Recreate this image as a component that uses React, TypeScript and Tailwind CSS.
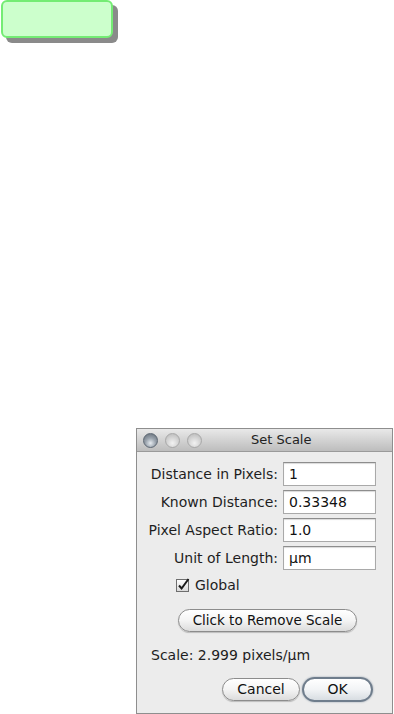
const font = { fontFamily: '"DejaVu Sans", Verdana, sans-serif' }

const Light = ({ dark }: { dark?: boolean }) => (
  <div
    className={`w-[15px] h-[15px] rounded-full border ${
      dark
        ? 'border-[#5d6773] bg-[radial-gradient(circle_at_50%_70%,#e6ebf0_0%,#9aa3ad_45%,#5f6973_100%)]'
        : 'border-[#a8a8a8] bg-[radial-gradient(circle_at_50%_70%,#f2f2f2_0%,#d4d4d4_50%,#b5b5b5_100%)]'
    }`}
  />
)

const Field = ({ label, value }: { label: string; value: string }) => (
  <div className="flex items-center h-[24px]">
    <div className="w-[146px] text-right pr-[5px] text-[14px] text-[#1e1e1e] whitespace-nowrap">{label}</div>
    <div className="w-[93px] h-[24px] border border-[#a9a9a9] border-t-[#8d8d8d] bg-white pl-[5px] flex items-center text-[14px] text-[#111] shadow-[inset_0_1px_1px_rgba(0,0,0,0.15)]">
      {value}
    </div>
  </div>
)

const Pill = ({ children, className = '' }: { children: React.ReactNode; className?: string }) => (
  <div
    className={`h-[23px] rounded-full border border-[#8c8c8c] bg-gradient-to-b from-white via-[#f4f4f4] to-[#dcdcdc] flex items-center justify-center text-[#111] shadow-[0_1px_1px_rgba(0,0,0,0.2)] whitespace-nowrap ${className}`}
  >
    {children}
  </div>
)

export default function App() {
  return (
    <div className="w-[394px] h-[714px] bg-white overflow-hidden flex flex-col" style={font}>
      {/* green badge */}
      <div className="ml-[1px] w-[112px] h-[38px] rounded-[6px] border-2 border-[#74ec74] bg-[#ccffcc] shadow-[5px_5px_0_#8a8a8a]" />

      {/* Set Scale dialog */}
      <div className="ml-[136px] mt-[390px] w-[257px] h-[286px] border border-[#8e8e8e] bg-[#ececec] flex flex-col">
        <div className="h-[23px] bg-gradient-to-b from-[#e9e9e9] to-[#bdbdbd] border-b border-[#9a9a9a] flex items-center">
          <div className="flex items-center gap-[7px] pl-[6px]">
            <Light dark />
            <Light />
            <Light />
          </div>
          <div className="ml-[49px] text-[13px] text-[#222]">Set Scale</div>
        </div>

        <div className="flex flex-col gap-[4px] pt-[10px]">
          <Field label="Distance in Pixels:" value="1" />
          <Field label="Known Distance:" value="0.33348" />
          <Field label="Pixel Aspect Ratio:" value="1.0" />
          <Field label="Unit of Length:" value="µm" />
        </div>

        <div className="flex items-center gap-[5px] pl-[39px] mt-[5px] h-[20px] text-[14px] text-[#1e1e1e]">
          <svg width="14" height="14" viewBox="0 0 14 14">
            <defs>
              <linearGradient id="cb" x1="0" y1="0" x2="0" y2="1">
                <stop offset="0" stopColor="#ffffff" />
                <stop offset="1" stopColor="#d8d8d8" />
              </linearGradient>
            </defs>
            <rect x="0.5" y="1.5" width="12" height="12" fill="url(#cb)" stroke="#6e6e6e" />
            <path d="M3 7.5 L5.6 10.5 L12.5 1" fill="none" stroke="#1a1a1a" strokeWidth="2" />
          </svg>
          <span>Global</span>
        </div>

        <div className="flex mt-[14px] pl-[41px]">
          <Pill className="w-[179px] text-[13.5px]">Click to Remove Scale</Pill>
        </div>

        <div className="mt-[13px] pl-[14px] text-[14px] text-[#1e1e1e] h-[20px] flex items-center whitespace-nowrap">
          Scale: 2.999 pixels/µm
        </div>

        <div className="flex mt-[13px] pl-[85px] gap-[2px]">
          <Pill className="w-[78px] text-[14px]">Cancel</Pill>
          <div className="w-[71px] h-[25px] -mt-[1px] rounded-full border-2 border-[#6f7d8c] bg-gradient-to-b from-white via-[#f2f4f6] to-[#d8dde2] flex items-center justify-center text-[14px] text-[#111] shadow-[0_0_2px_#8c9aa8]">
            OK
          </div>
        </div>
      </div>
    </div>
  )
}
